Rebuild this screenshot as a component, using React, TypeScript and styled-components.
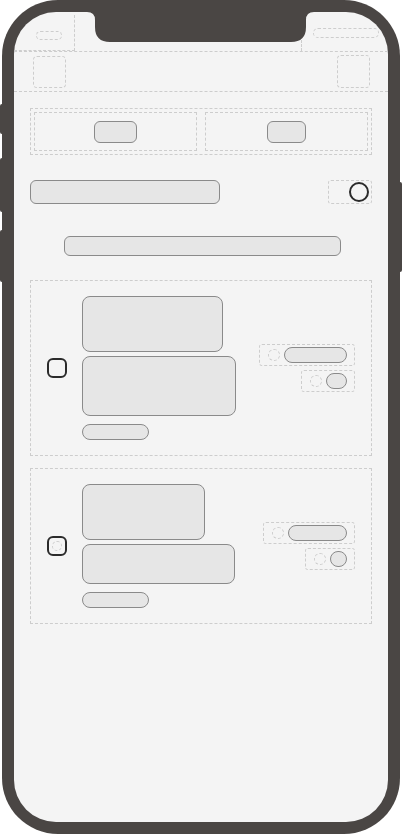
import styled, { createGlobalStyle } from 'styled-components'

const GlobalStyle = createGlobalStyle`
  html, body {
    margin: 0;
    padding: 0;
    background: #ffffff;
    font-family: 'Liberation Sans', Arial, sans-serif;
  }
  * { box-sizing: border-box; }
`

const DASH = '#cdcdcd'

type CardData = {
  blocks: { w: number; h: number }[]
  first: { w: number; pill: number }
  second: { w: number; pill: number }
  ghost?: boolean
}

const cards: CardData[] = [
  {
    blocks: [
      { w: 141, h: 56 },
      { w: 154, h: 60 },
    ],
    first: { w: 96, pill: 63 },
    second: { w: 54, pill: 21 },
  },
  {
    blocks: [
      { w: 123, h: 56 },
      { w: 153, h: 40 },
    ],
    first: { w: 92, pill: 59 },
    second: { w: 50, pill: 17 },
    ghost: true,
  },
]

export default function App() {
  return (
    <Page>
      <GlobalStyle />
      <SideButton side="left" top={104} h={30} />
      <SideButton side="left" top={158} h={54} />
      <SideButton side="left" top={230} h={52} />
      <SideButton side="right" top={182} h={90} />
      <Frame>
        <Screen>
          <Notch viewBox="0 0 230 34" width="230" height="34">
            <path d="M0 0 H230 V2 H228 Q220 2 220 10 V17 Q220 32 205 32 H24 Q9 32 9 17 V10 Q9 2 1 2 H0 Z" />
          </Notch>
          <StatusBar>
            <StatusLeft>
              <Ghost w={26} h={9} round />
            </StatusLeft>
            <StatusRight>
              <Ghost w={66} h={10} round />
            </StatusRight>
          </StatusBar>
          <Header>
            <Ghost w={33} h={32} />
            <Ghost w={33} h={33} />
          </Header>
          <Content>
            <Tabs>
              <Tab>
                <Block w={43} h={22} />
              </Tab>
              <Tab>
                <Block w={39} h={22} />
              </Tab>
            </Tabs>
            <Row>
              <Block w={190} h={24} />
              <RadioBox>
                <Radio />
              </RadioBox>
            </Row>
            <Search />
            {cards.map((card, i) => (
              <Card key={i}>
                <Checkbox>{card.ghost && <Ghost w={10} h={10} round />}</Checkbox>
                <Stack>
                  {card.blocks.map((b, j) => (
                    <Block key={j} w={b.w} h={b.h} r={8} />
                  ))}
                  <Caption />
                </Stack>
                <Meta>
                  <MetaItem w={card.first.w}>
                    <Ghost w={12} h={12} round />
                    <Block w={card.first.pill} h={16} r={8} />
                  </MetaItem>
                  <MetaItem w={card.second.w}>
                    <Ghost w={12} h={12} round />
                    <Block w={card.second.pill} h={16} r={8} />
                  </MetaItem>
                </Meta>
              </Card>
            ))}
          </Content>
        </Screen>
      </Frame>
    </Page>
  )
}

const Page = styled.div`
  position: relative;
  width: 402px;
  height: 834px;
  overflow: hidden;
`

const SideButton = styled.div<{ side: 'left' | 'right'; top: number; h: number }>`
  position: absolute;
  ${(p) => (p.side === 'left' ? 'left: 0;' : 'right: 0;')}
  top: ${(p) => p.top}px;
  width: 4px;
  height: ${(p) => p.h}px;
  background: #4a4644;
  border-radius: 2px;
`

const Frame = styled.div`
  position: relative;
  margin-left: 2px;
  width: 398px;
  height: 834px;
  padding: 12px;
  background: #4a4644;
  border-radius: 56px;
`

const Screen = styled.div`
  position: relative;
  height: 100%;
  background: #f4f4f4;
  border-radius: 42px;
  overflow: hidden;
  display: flex;
  flex-direction: column;
`

const Notch = styled.svg`
  position: absolute;
  z-index: 2;
  left: 72px;
  top: -2px;
  fill: #4a4644;
`

const StatusBar = styled.div`
  height: 40px;
  flex-shrink: 0;
  display: flex;
  justify-content: space-between;
  border-bottom: 1px dashed ${DASH};
`

const StatusLeft = styled.div`
  width: 61px;
  margin-top: 3px;
  display: flex;
  align-items: center;
  padding: 6px 0 0 22px;
  border-right: 1px dashed ${DASH};
  border-bottom: 1px dashed ${DASH};
`

const StatusRight = styled.div`
  width: 87px;
  margin-top: 28px;
  display: flex;
  align-items: flex-start;
  padding-left: 11px;
  border-left: 1px dashed ${DASH};

  & > div {
    margin-top: -12px;
  }
`

const Header = styled.div`
  height: 40px;
  flex-shrink: 0;
  display: flex;
  align-items: center;
  justify-content: space-between;
  padding: 0 18px 0 19px;
  border-bottom: 1px dashed ${DASH};
`

const Ghost = styled.div<{ w: number; h: number; round?: boolean }>`
  width: ${(p) => p.w}px;
  height: ${(p) => p.h}px;
  flex-shrink: 0;
  border: 1px dashed ${DASH};
  border-radius: ${(p) => (p.round ? '999px' : '4px')};
`

const Block = styled.div<{ w: number; h: number; r?: number }>`
  width: ${(p) => p.w}px;
  height: ${(p) => p.h}px;
  flex-shrink: 0;
  background: #e6e6e6;
  border: 1px solid #8a8a8a;
  border-radius: ${(p) => p.r ?? 6}px;
`

const Content = styled.div`
  display: flex;
  flex-direction: column;
  padding: 16px 16px 0;
`

const Tabs = styled.div`
  height: 47px;
  display: grid;
  grid-template-columns: 1fr 1fr;
  gap: 8px;
  padding: 3px;
  border: 1px dashed ${DASH};
`

const Tab = styled.div`
  display: flex;
  align-items: center;
  justify-content: center;
  border: 1px dashed ${DASH};
`

const Row = styled.div`
  margin-top: 25px;
  display: flex;
  align-items: center;
  justify-content: space-between;
`

const RadioBox = styled.div`
  width: 44px;
  height: 24px;
  display: flex;
  align-items: center;
  justify-content: flex-end;
  padding-right: 2px;
  border: 1px dashed ${DASH};
  border-radius: 3px;
`

const Radio = styled.div`
  width: 20px;
  height: 20px;
  border: 2px solid #2b2b2b;
  border-radius: 50%;
`

const Search = styled.div`
  margin: 32px 31px 0 34px;
  height: 20px;
  background: #e6e6e6;
  border: 1px solid #8a8a8a;
  border-radius: 6px;
`

const Card = styled.div`
  display: flex;
  align-items: center;
  padding: 15px 16px 15px 16px;
  border: 1px dashed ${DASH};
  margin-top: 24px;

  & + & {
    margin-top: 12px;
  }
`

const Checkbox = styled.div`
  width: 20px;
  height: 20px;
  flex-shrink: 0;
  display: flex;
  align-items: center;
  justify-content: center;
  border: 2px solid #2b2b2b;
  border-radius: 6px;
`

const Stack = styled.div`
  margin-left: 15px;
  display: flex;
  flex-direction: column;
  gap: 4px;
`

const Caption = styled.div`
  margin-top: 4px;
  width: 67px;
  height: 16px;
  background: #e6e6e6;
  border: 1px solid #8a8a8a;
  border-radius: 8px;
`

const Meta = styled.div`
  margin-left: auto;
  display: flex;
  flex-direction: column;
  align-items: flex-end;
  gap: 4px;
`

const MetaItem = styled.div<{ w: number }>`
  width: ${(p) => p.w}px;
  height: 22px;
  display: flex;
  align-items: center;
  justify-content: flex-end;
  gap: 4px;
  padding-right: 7px;
  border: 1px dashed ${DASH};
  border-radius: 3px;
`
